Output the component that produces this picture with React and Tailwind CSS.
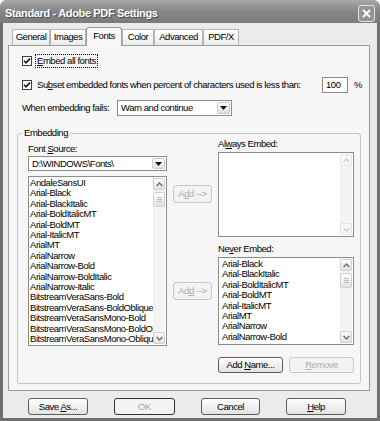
import React from 'react'

const fontList = [
  'AndaleSansUI',
  'Arial-Black',
  'Arial-BlackItalic',
  'Arial-BoldItalicMT',
  'Arial-BoldMT',
  'Arial-ItalicMT',
  'ArialMT',
  'ArialNarrow',
  'ArialNarrow-Bold',
  'ArialNarrow-BoldItalic',
  'ArialNarrow-Italic',
  'BitstreamVeraSans-Bold',
  'BitstreamVeraSans-BoldOblique',
  'BitstreamVeraSansMono-Bold',
  'BitstreamVeraSansMono-BoldOblique',
  'BitstreamVeraSansMono-Oblique',
]

const neverList = [
  'Arial-Black',
  'Arial-BlackItalic',
  'Arial-BoldItalicMT',
  'Arial-BoldMT',
  'Arial-ItalicMT',
  'ArialMT',
  'ArialNarrow',
  'ArialNarrow-Bold',
]

function Check() {
  return (
    <span className="flex h-[10px] w-[10px] shrink-0 items-center justify-center border border-[#3c3c3c] bg-white">
      <svg width="8" height="8" viewBox="0 0 8 8">
        <path d="M1 3.8 L3 5.8 L7 1.6" fill="none" stroke="#111" strokeWidth="1.6" />
      </svg>
    </span>
  )
}

function Arrow({ up, faded }) {
  return (
    <div
      className={
        'flex h-[12px] w-[12px] shrink-0 items-center justify-center rounded-[2px] border ' +
        (faded ? 'border-[#e4e4e4] bg-[#f6f6f6]' : 'border-[#cfcfcf] bg-linear-to-b from-white to-[#e2e2e2]')
      }
    >
      <svg width="7" height="5" viewBox="0 0 7 5">
        <path
          d={up ? 'M0.6 4 L3.5 1.1 L6.4 4' : 'M0.6 1 L3.5 3.9 L6.4 1'}
          fill="none"
          stroke={faded ? '#cdcdcd' : '#6b6b6b'}
          strokeWidth="1.4"
        />
      </svg>
    </div>
  )
}

function ScrollBar({ thumb, faded }) {
  return (
    <div className="flex h-full w-[12px] shrink-0 flex-col bg-[#f4f4f4]">
      <Arrow up faded={faded} />
      {thumb && (
        <div className="mt-[2px] flex h-[15px] w-[12px] flex-col items-center justify-center gap-[1px] rounded-[2px] border border-[#cfcfcf] bg-linear-to-b from-white to-[#e2e2e2]">
          <span className="h-px w-[5px] bg-[#bdbdbd]" />
          <span className="h-px w-[5px] bg-[#bdbdbd]" />
          <span className="h-px w-[5px] bg-[#bdbdbd]" />
        </div>
      )}
      <div className="flex-1" />
      <Arrow faded={faded} />
    </div>
  )
}

function Select({ value, className }) {
  return (
    <div className={'flex items-center border border-[#8c8c8c] bg-white ' + className}>
      <span className="flex-1 truncate pl-[3px] leading-none">{value}</span>
      <span className="mr-px flex h-[calc(100%-2px)] w-[13px] items-center justify-center rounded-[2px] border border-[#c9c9c9] bg-linear-to-b from-white to-[#e0e0e0]">
        <svg width="7" height="4" viewBox="0 0 7 4">
          <path d="M0 0 H7 L3.5 4 Z" fill="#111" />
        </svg>
      </span>
    </div>
  )
}

function Btn({ children, className, disabled, dark }) {
  return (
    <div
      className={
        'flex items-center justify-center rounded-[3px] border leading-none ' +
        (dark
          ? 'border-[#303030] bg-[#f3f3f3] text-[#a8a8a8] '
          : disabled
            ? 'border-[#c8c8c8] bg-[#f3f3f3] text-[#acacac] '
            : 'border-[#5c5c5c] bg-linear-to-b from-white to-[#e3e3e3] text-black ') +
        className
      }
    >
      <span>{children}</span>
    </div>
  )
}

function Tab({ label, w, active }) {
  if (active) {
    return (
      <div className={'relative z-10 -mb-px flex h-[19px] items-center justify-center rounded-t-[3px] border-x border-t border-[#9a9a9a] bg-[#f8f8f8] pb-[2px] ' + w}>
        {label}
      </div>
    )
  }
  return (
    <div className={'flex h-[16px] items-center justify-center border-x border-t border-[#b4b4b4] bg-linear-to-b from-white to-[#ececec] ' + w}>
      {label}
    </div>
  )
}

export default function App() {
  return (
    <div className="flex h-[421px] w-[380px] flex-col overflow-hidden rounded-t-[7px] bg-[#6f6f6f] text-[9.5px] tracking-[-0.45px] text-black font-['Liberation_Sans',Arial,sans-serif]">
      {/* Title bar */}
      <div className="flex h-[23px] shrink-0 items-center bg-linear-to-b from-[#a9a9a9] via-[#858585] to-[#7b7b7b] pl-[5px] pr-[5px] pt-[3px]">
        <span className="text-[11px] font-bold tracking-[-0.35px] text-white [text-shadow:1px_1px_0_#4a4a4a]">
          Standard - Adobe PDF Settings
        </span>
        <div className="ml-auto flex h-[17px] w-[17px] items-center justify-center rounded-[3px] border border-[#e4e4e4] bg-[#949494]">
          <svg width="9" height="9" viewBox="0 0 9 9">
            <path d="M1 1 L8 8 M8 1 L1 8" stroke="#fff" strokeWidth="1.8" />
          </svg>
        </div>
      </div>

      {/* Body */}
      <div className="mx-[3px] mb-[3px] flex flex-1 flex-col bg-[#ebebeb] pl-[5px] pr-[7px] pt-[4px]">
        {/* Tabs */}
        <div className="flex h-[18px] items-end pl-[4px]">
          <Tab label="General" w="w-[38px]" />
          <Tab label="Images" w="w-[36px]" />
          <Tab label="Fonts" w="w-[36px]" active />
          <Tab label="Color" w="w-[32px]" />
          <Tab label="Advanced" w="w-[49px]" />
          <Tab label="PDF/X" w="w-[36px]" />
        </div>

        {/* Panel */}
        <div className="flex h-[346px] flex-col border border-[#9a9a9a] bg-[#f6f6f6] pl-[13px]">
          <div className="mt-[8px] flex h-[14px] items-center">
            <Check />
            <span className="ml-[3px] border border-dotted border-black px-px leading-[12px]">
              <u>E</u>mbed all fonts
            </span>
          </div>

          <div className="mt-[9px] flex h-[16px] items-center">
            <Check />
            <span className="ml-[5px] w-[285px] whitespace-nowrap">
              Su<u>b</u>set embedded fonts when percent of characters used is less than:
            </span>
            <div className="flex h-[16px] w-[26px] items-center border border-[#8c8c8c] bg-white pl-[3px]">100</div>
            <span className="ml-[6px]">%</span>
          </div>

          <div className="mt-[7px] flex h-[16px] items-center">
            <span className="w-[95px] whitespace-nowrap">When embedding fails:</span>
            <Select value="Warn and continue" className="h-[16px] w-[115px]" />
          </div>

          {/* Embedding group */}
          <fieldset className="ml-[-5px] mt-[11px] w-[344px] rounded-[3px] border border-[#c4c4c4] pb-[10px] pl-[10px] pr-[6px]">
            <legend className="ml-[-6px] px-[2px] leading-[12px]">Embedding</legend>
            <div className="flex">
              {/* Source column */}
              <div className="flex w-[139px] flex-col">
                <span className="mt-[5px] leading-[10px]">
                  Font <u>S</u>ource:
                </span>
                <Select value="D:\WINDOWS\Fonts\" className="mt-[2px] h-[15px] w-[139px]" />
                <div className="mt-[5px] flex h-[170px] border border-[#8c8c8c] bg-white">
                  <div className="flex-1 overflow-hidden pl-px pt-px">
                    {fontList.map((f) => (
                      <div key={f} className="whitespace-nowrap leading-[10.4px]">
                        {f}
                      </div>
                    ))}
                  </div>
                  <div className="py-px pr-px">
                    <ScrollBar thumb />
                  </div>
                </div>
              </div>

              {/* Add buttons */}
              <div className="ml-[6px] flex w-[39px] flex-col">
                <Btn disabled className="mt-[46px] h-[18px] w-[39px]">
                  A<u>d</u>d --&gt;
                </Btn>
                <Btn disabled className="mt-[79px] h-[18px] w-[39px]">
                  Ad<u>d</u> --&gt;
                </Btn>
              </div>

              {/* Always / Never column */}
              <div className="ml-[6px] flex w-[136px] flex-col">
                <span className="leading-[10px]">
                  Al<u>w</u>ays Embed:
                </span>
                <div className="mt-[3px] flex h-[85px] border border-[#8c8c8c] bg-white">
                  <div className="flex-1" />
                  <div className="py-px pr-px">
                    <ScrollBar faded />
                  </div>
                </div>
                <span className="mt-[7px] leading-[10px]">
                  Ne<u>v</u>er Embed:
                </span>
                <div className="mt-[3px] flex h-[88px] border border-[#8c8c8c] bg-white">
                  <div className="flex-1 overflow-hidden pl-[3px] pt-px">
                    {neverList.map((f) => (
                      <div key={f} className="whitespace-nowrap leading-[10.4px]">
                        {f}
                      </div>
                    ))}
                  </div>
                  <div className="py-px pr-px">
                    <ScrollBar thumb />
                  </div>
                </div>
                <div className="mt-[12px] flex justify-between">
                  <Btn className="h-[16px] w-[65px]">
                    Add <u>N</u>ame...
                  </Btn>
                  <Btn disabled className="h-[16px] w-[65px]">
                    <u>R</u>emove
                  </Btn>
                </div>
              </div>
            </div>
          </fieldset>
        </div>

        {/* Bottom buttons */}
        <div className="mt-[7px] flex h-[17px] gap-[26px] pl-[20px]">
          <Btn className="h-[17px] w-[60px]">
            Save <u>A</u>s...
          </Btn>
          <Btn dark className="h-[17px] w-[61px]">
            OK
          </Btn>
          <Btn className="h-[17px] w-[59px]">Cancel</Btn>
          <Btn className="h-[17px] w-[60px]">
            <u>H</u>elp
          </Btn>
        </div>
      </div>
    </div>
  )
}
